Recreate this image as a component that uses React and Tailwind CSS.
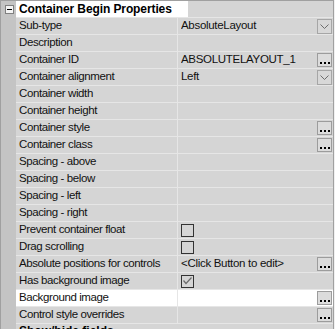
import React from 'react';

const rows = [
  { label: 'Sub-type', value: 'AbsoluteLayout', kind: 'dropdown' },
  { label: 'Description' },
  { label: 'Container ID', value: 'ABSOLUTELAYOUT_1', kind: 'dots' },
  { label: 'Container alignment', value: 'Left', kind: 'dropdown' },
  { label: 'Container width' },
  { label: 'Container height' },
  { label: 'Container style', kind: 'dots' },
  { label: 'Container class', kind: 'dots' },
  { label: 'Spacing - above' },
  { label: 'Spacing - below' },
  { label: 'Spacing - left' },
  { label: 'Spacing - right' },
  { label: 'Prevent container float', kind: 'check' },
  { label: 'Drag scrolling', kind: 'check' },
  { label: 'Absolute positions for controls', value: '<Click Button to edit>', kind: 'dots' },
  { label: 'Has background image', kind: 'checked' },
  { label: 'Background image', kind: 'dots', selected: true },
  { label: 'Control style overrides', kind: 'dots' },
];

function DotsButton() {
  return (
    <div className="w-[15px] h-[14px] border border-[#9c9c9c] bg-[#dcdcdc] flex items-end justify-center gap-[2px] pb-[2px]">
      <span className="w-[2px] h-[2px] bg-black" />
      <span className="w-[2px] h-[2px] bg-black" />
      <span className="w-[2px] h-[2px] bg-black" />
    </div>
  );
}

function DropButton() {
  return (
    <div className="w-[15px] h-[15px] border border-[#a6a6a6] bg-[#d8d8d8] flex items-center justify-center">
      <svg width="9" height="5" viewBox="0 0 9 5">
        <path d="M0.5 0.5 L4.5 4.5 L8.5 0.5" fill="none" stroke="#6d6d6d" strokeWidth="1" />
      </svg>
    </div>
  );
}

function Check({ checked }) {
  return (
    <div className="w-[13px] h-[13px] border border-[#333333] flex items-center justify-center">
      {checked && (
        <svg width="9" height="8" viewBox="0 0 9 8">
          <path d="M0.5 3.5 L3 6.5 L8.5 0.5" fill="none" stroke="#6b6b6b" strokeWidth="1.2" />
        </svg>
      )}
    </div>
  );
}

function Row({ row }) {
  const bg = row.selected ? 'bg-white' : 'bg-[#d5d5d5]';
  return (
    <div className={`flex h-[17px] border-b border-[#e6e6e6] ${bg}`}>
      <div className="w-[161px] pl-[3px] flex items-center text-[11.5px] tracking-[-0.4px] text-[#111] whitespace-nowrap overflow-hidden">
        {row.label}
      </div>
      <div className="flex-1 border-l border-[#e6e6e6] flex items-center pl-[3px] pr-[1px]">
        {(row.kind === 'check' || row.kind === 'checked') && <Check checked={row.kind === 'checked'} />}
        <span className="flex-1 text-[11.5px] tracking-[-0.3px] text-[#111] whitespace-nowrap overflow-hidden">{row.value}</span>
        {row.kind === 'dots' && <DotsButton />}
        {row.kind === 'dropdown' && <DropButton />}
      </div>
    </div>
  );
}

export default function App() {
  return (
    <div className="w-[335px] h-[329px] overflow-hidden bg-[#f0f0f0] flex" style={{ fontFamily: '"Liberation Sans", Arial, sans-serif' }}>
      <div className="w-[334px] flex border-r border-[#a0a0a0] border-t border-t-[#a0a0a0]">
        <div className="w-[16px] bg-[#c4c4c4] border-l border-[#a0a0a0] pt-[4px] pl-[4px]">
          <div className="w-[9px] h-[9px] border border-[#808080] bg-[#f4f4f4] flex items-center justify-center">
            <span className="w-[5px] h-px bg-black" />
          </div>
        </div>
        <div className="flex-1 flex flex-col bg-[#d5d5d5]">
          <div className="flex h-[17px] border-b border-[#e6e6e6]">
            <div className="w-[172px] bg-white pl-[3px] flex items-center text-[12px] tracking-[-0.1px] font-bold text-black whitespace-nowrap">
              Container Begin Properties
            </div>
            <div className="flex-1 bg-[#d5d5d5]" />
          </div>
          {rows.map((r) => (
            <Row key={r.label} row={r} />
          ))}
          <div className="flex h-[12px] pl-[3px] items-start text-[12px] leading-[14px] font-bold text-black whitespace-nowrap">
            Show/hide fields
          </div>
        </div>
      </div>
    </div>
  );
}
